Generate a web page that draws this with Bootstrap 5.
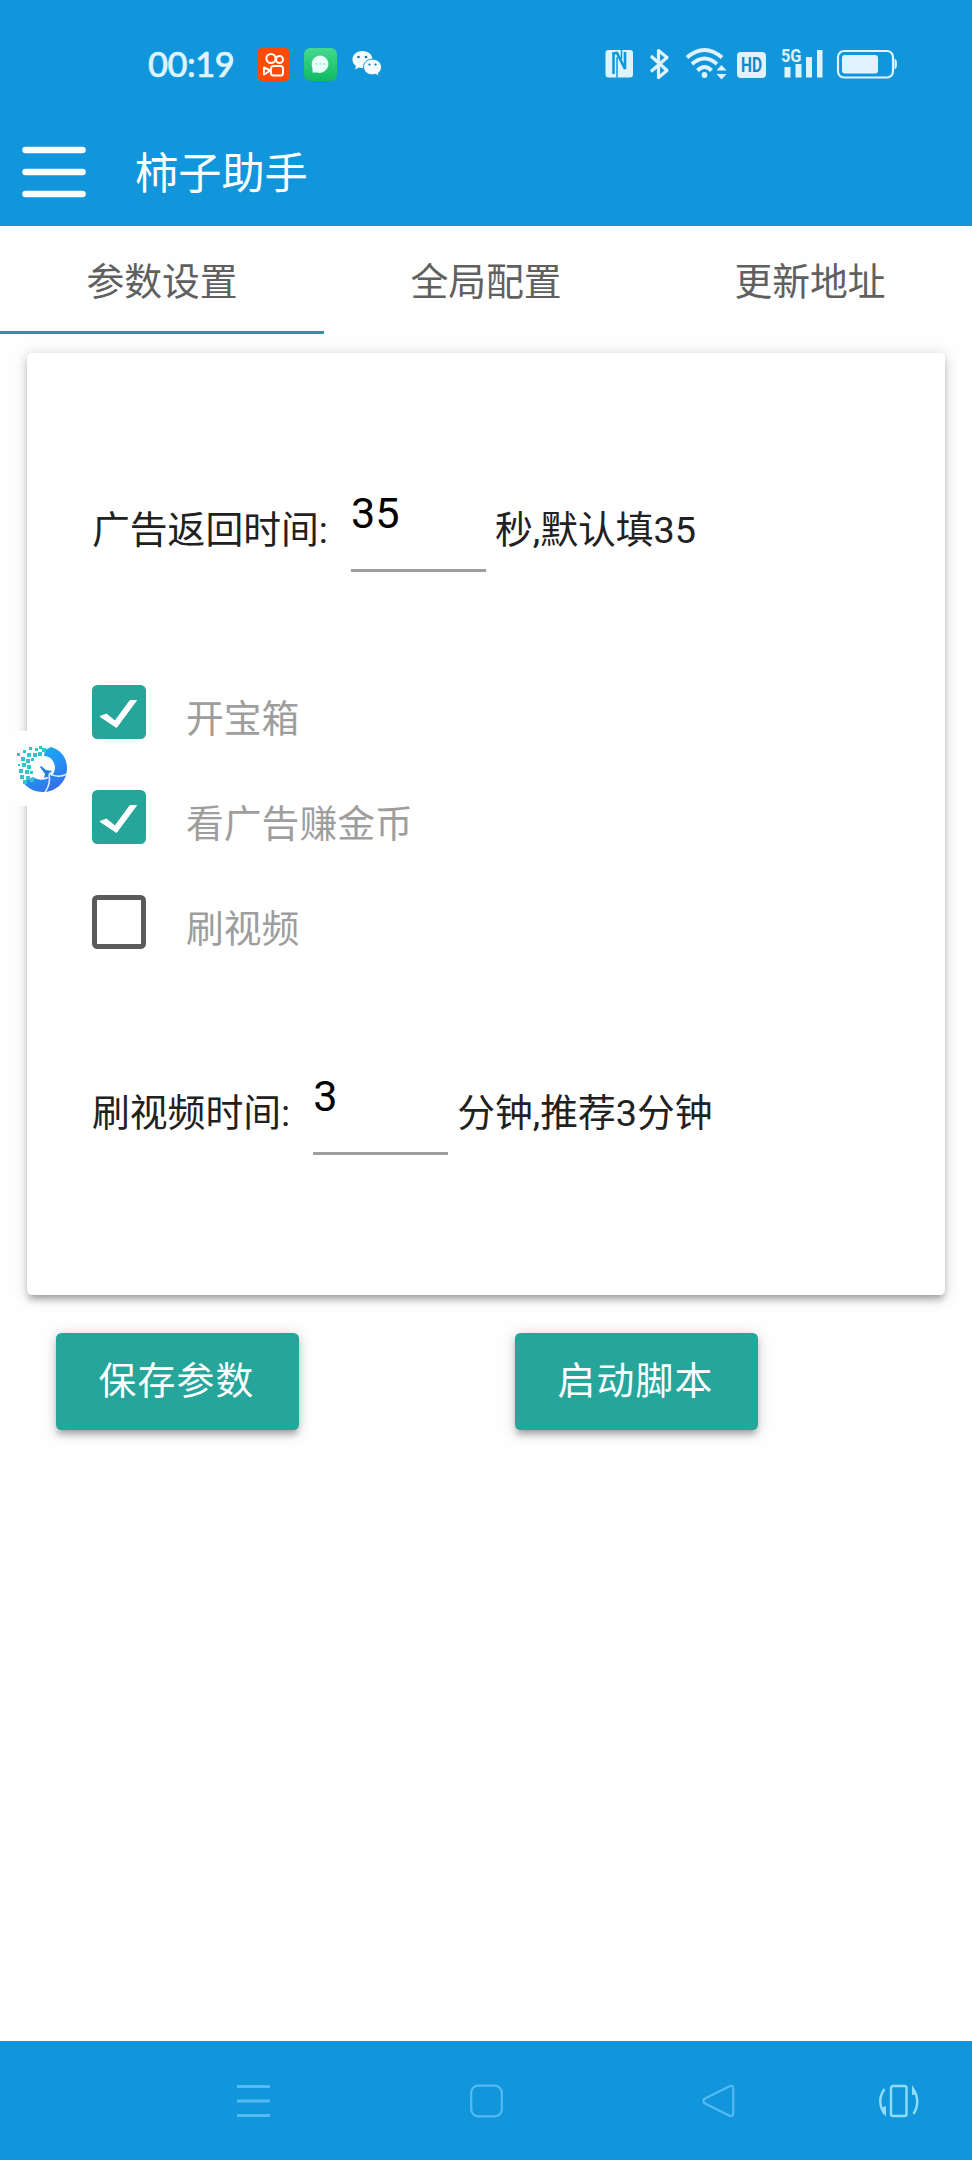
<!DOCTYPE html>
<html lang="zh-CN">
<head>
<meta charset="utf-8">
<meta name="viewport" content="width=device-width, initial-scale=1">
<title>柿子助手</title>
<link href="https://cdn.jsdelivr.net/npm/bootstrap@5.3.0/dist/css/bootstrap.min.css" rel="stylesheet">
<style>
  body{font-family:Roboto,"Noto Sans CJK SC",sans-serif;font-size:37.8px;line-height:56px;color:#212121;background:#fefefe}
  .screen{width:972px;height:2160px}
  .brand-bg{background:#1296db}
  svg{display:block;flex:none;overflow:visible}
  .status-bar{height:118px;padding:10px 75px 0 148px;color:#dff3ff}
  .clock{font:500 34.5px/40px Lato,sans-serif;letter-spacing:-.5px;width:109px;-webkit-text-stroke:.6px currentColor}
  .status-gap{margin-left:14px}
  .app-bar{height:108px;padding-left:22px}
  .app-title{font-size:43.2px;font-weight:400;margin-left:49px;padding-top:6px}
  .tab-row{height:108px}
  .tab-row .nav-link{color:#606060;height:108px;padding:2px 0 0;line-height:108px;border:0;border-radius:0;border-bottom:3px solid transparent}
  .tab-row .nav-link.active{border-bottom-color:#3390ad;color:#606060}
  .raised{box-shadow:0 5.4px 5.4px 0 rgba(0,0,0,.14),0 8.1px 2.7px -5.4px rgba(0,0,0,.12),0 2.7px 13.5px 0 rgba(0,0,0,.2)}
  .panel{margin:19px 27px 0;height:942px;border:0;border-radius:5.4px;padding:100px 65px 0}
  .field-row{height:119px}
  .field-row label,.field-row span{padding-top:35px}
  .field-row .form-control{width:135px;height:119px;margin:0 9px 0 23px;padding:4px 0 0;border:0;border-bottom:3px solid #9e9e9e;border-radius:0;font-size:43.2px;line-height:66px;color:#000;background:none;box-shadow:none}
  .options{margin-top:113px;height:264px;margin-bottom:87px;gap:51.3px}
  .options .form-check{padding:0;margin:0;min-height:0;height:54px}
  .options .form-check-input{width:54px;height:54px;margin:0;float:none;border:5.4px solid #5a5a5a;border-radius:5.4px;background-color:#fff}
  .options .form-check-input:checked{border-color:#26a69a;background-color:#26a69a;background-image:url("data:image/svg+xml,%3Csvg xmlns='http://www.w3.org/2000/svg' viewBox='0 0 54 54'%3E%3Cpath d='M8 31.500L24.500 42.500L44.500 15.500H38L23 36L14.500 29Z' fill='%23fff' stroke='%23fff'/%3E%3C/svg%3E");background-size:54px 54px;background-origin:border-box;background-position:0 0}
  .options .form-check-label{color:#9e9e9e;margin-left:40px;padding-top:6px}
  .actions{padding:38px 56px 0;gap:216px}
  .actions .btn{height:97.2px;width:243px;padding:0 2px 0 0;background:#26a69a;color:#fff;border:0;border-radius:5.4px;font-size:37.8px;letter-spacing:1.2px}
  .sys-nav{height:119px;color:#55b9f3;padding-left:237px;gap:199.5px}
  .rotate-icon{margin-left:-57px}
  .float-ball{left:0;top:731px;width:82px;height:75px;background:#fefefe;border-radius:0 37px 37px 0}
</style>
</head>
<body>
<div class="screen position-relative d-flex flex-column overflow-hidden">
  <header class="brand-bg">
    <div class="status-bar d-flex align-items-center">
      <span class="clock">00:19</span>
      <svg width="33" height="33" viewBox="0 0 33 33" fill="none" stroke="#fff" stroke-width="2"><rect width="33" height="33" rx="5" fill="#ff4a08" stroke="none"/><circle cx="14" cy="10.500" r="4.600"/><circle cx="22.500" cy="11.500" r="3.500"/><rect x="14" y="18" width="12" height="9.500" rx="2.500"/><path d="M13.500 22.500L7 19.500v7z" stroke-linejoin="round"/></svg>
      <svg class="status-gap" width="33" height="33" viewBox="0 0 33 33"><defs><linearGradient id="g" x2="0" y2="1"><stop stop-color="#45d98d"/><stop offset="1" stop-color="#10b964"/></linearGradient></defs><rect width="33" height="33" rx="6" fill="url(#g)"/><path d="M16.500 7.500a9 8.700 0 1 1-3.500 17H8.500V20A8.800 8.800 0 0 1 16.500 7.500z" fill="#e9fff8"/><g fill="#9fe8c8"><circle cx="12.500" cy="16" r="1.100"/><circle cx="16.500" cy="16" r="1.100"/><circle cx="20.500" cy="16" r="1.100"/></g></svg>
      <svg class="status-gap" width="31" height="28" viewBox="-1 0 31 28"><path d="M10.500 1C4.500 1 .5 4.800.5 9.500c0 2.800 1.300 5 3.500 6.500L3 19.500l4-2c1.200.4 2.400.5 3.500.5 6 0 10-4 10-8.500S16.500 1 10.500 1z" fill="#f4fcff"/><path d="M20.500 9.200c-5.400 0-9 3.500-9 7.800s3.600 7.800 9 7.800c1.100 0 2.200-.2 3.200-.5l3.500 2.200-.8-3.500c2.100-1.500 3.100-3.500 3.100-6 0-4.300-3.600-7.800-9-7.800z" fill="#f4fcff" stroke="#1296db"/><g fill="#1273ad"><circle cx="6.500" cy="7" r="1.300"/><circle cx="14" cy="7" r="1.300"/><circle cx="17.500" cy="14.500" r="1.100"/><circle cx="23.500" cy="14.500" r="1.100"/></g></svg>
      <div class="ms-auto d-flex">
        <svg width="45" height="32" viewBox="605 48 45 32"><rect x="605.500" y="50" width="27.500" height="27.500" rx="3" fill="currentColor"/><path d="M613.500 74V53.500L617 53L625 69V52" fill="none" stroke="#1296db" stroke-width="2.600"/><path d="M617 57v20.500M621.500 50v9" stroke="#1296db" stroke-width="1.500"/></svg>
        <svg width="36" height="32" viewBox="650 48 36 32" fill="none" stroke="currentColor" stroke-width="3.200"><path d="M651 56L667 70.500L658.500 77.500V50.500L667 57.500L651 71.500" stroke-linejoin="round"/></svg>
        <svg width="51" height="32" viewBox="686 48 51 32" fill="none" stroke="currentColor" stroke-width="4"><path d="M687 57.500Q704.500 42.500 722 57.500M692 64Q704.500 53 717 64M697.500 70.500Q704.500 63.500 711.500 70.500"/><circle cx="704.500" cy="75" r="2.900" fill="currentColor" stroke="none"/><path d="M721.500 65L726.500 70.500H716.500zM721.500 79.500L726.500 74H716.500z" fill="currentColor" stroke="none"/></svg>
        <svg width="44" height="32" viewBox="737 48 44 32"><rect x="737" y="52" width="29" height="26" rx="4" fill="currentColor"/><text x="751.500" y="72" text-anchor="middle" textLength="21" lengthAdjust="spacingAndGlyphs" font-family="Roboto,sans-serif" font-weight="700" font-size="20" fill="#1785c4">HD</text></svg>
        <svg width="56" height="32" viewBox="781 48 56 32" fill="currentColor"><text x="781" y="62" font-family="Roboto,sans-serif" font-weight="700" font-size="18.500" textLength="20.500" lengthAdjust="spacingAndGlyphs">5G</text><path d="M784.500 67h6v10.500h-6zM795.500 64h6v13.500h-6zM806 57h6v20.500h-6zM817 50h5.500v27.500H817z"/></svg>
        <svg width="60" height="32" viewBox="837 48 60 32" fill="currentColor"><rect x="838" y="51" width="55" height="26.500" rx="6" fill="none" stroke="currentColor" stroke-width="2.200"/><rect x="842" y="55" width="36" height="18.500" rx="3"/><path d="M894.500 59q2.500 0 2.500 5t-2.500 5z"/></svg>
      </div>
    </div>
    <div class="app-bar d-flex align-items-center">
      <svg width="64" height="52" viewBox="0 0 64 52" stroke="#fff" stroke-width="6.500" stroke-linecap="round"><path d="M3.500 4h57M3.500 26h57M3.500 48h57"/></svg>
      <h1 class="app-title text-white mb-0">柿子助手</h1>
    </div>
  </header>

  <ul class="tab-row nav nav-justified">
    <li class="nav-item"><a class="nav-link active" href="#">参数设置</a></li>
    <li class="nav-item"><a class="nav-link" href="#">全局配置</a></li>
    <li class="nav-item"><a class="nav-link" href="#">更新地址</a></li>
  </ul>

  <main>
    <section class="panel raised card">
      <div class="field-row d-flex align-items-center">
        <label for="back">广告返回时间:</label>
        <input id="back" class="form-control" value="35">
        <span>秒,默认填35</span>
      </div>
      <div class="options d-flex flex-column">
        <div class="form-check d-flex"><input class="form-check-input" type="checkbox" id="o1" checked><label class="form-check-label text-nowrap" for="o1">开宝箱</label></div>
        <div class="form-check d-flex"><input class="form-check-input" type="checkbox" id="o2" checked><label class="form-check-label text-nowrap" for="o2">看广告赚金币</label></div>
        <div class="form-check d-flex"><input class="form-check-input" type="checkbox" id="o3"><label class="form-check-label text-nowrap" for="o3">刷视频</label></div>
      </div>
      <div class="field-row d-flex align-items-center">
        <label for="watch">刷视频时间:</label>
        <input id="watch" class="form-control" value="3">
        <span>分钟,推荐3分钟</span>
      </div>
    </section>
    <div class="actions d-flex">
      <button class="btn raised" type="button">保存参数</button>
      <button class="btn raised" type="button">启动脚本</button>
    </div>
  </main>

  <footer class="sys-nav brand-bg mt-auto d-flex align-items-center">
    <svg width="33" height="34" viewBox="0 0 33 34" stroke="currentColor" stroke-width="2.800"><path d="M0 2.500h33M0 17h33M0 31.500h33"/></svg>
    <svg width="33" height="34" viewBox="0 0 33 34" fill="none" stroke="currentColor" stroke-width="2.200"><rect x="1.200" y="1.700" width="30.600" height="30.600" rx="7"/></svg>
    <svg width="33" height="34" viewBox="0 0 33 34" fill="none" stroke="currentColor" stroke-width="2.200"><path d="M2.200 15L27.500 2.200Q31.200.8 31.200 5V29Q31.200 33.200 27.500 31.800L2.200 19Q.4 17 2.200 15z"/></svg>
    <svg class="rotate-icon" width="42" height="34" viewBox="0 0 42 34" fill="none" stroke="#8fdcff" stroke-width="2.400"><rect x="13" y="2" width="15.500" height="30" rx="2"/><path d="M6.500 5Q-2 17 6.500 30M34.500 4Q43.500 17 35.500 30"/><path d="M3 24l5-2v11zM34 1l5 9-5 1z" fill="#8fdcff" stroke="none"/></svg>
  </footer>

  <div class="float-ball position-absolute">
    <svg width="82" height="75" viewBox="0 731 82 75"><defs><linearGradient id="b" x1="0" y1="0" x2=".6" y2="1"><stop stop-color="#20b8df"/><stop offset=".5" stop-color="#2099f5"/><stop offset="1" stop-color="#3570e8"/></linearGradient></defs>
      <path d="M45 750L51 747C62 750 67 759 67 768C67 782 56 792 43 792C34 792 27 788 23 782L33 777C41 783 54 779 55 768C55 762 51 756 44 756Z" fill="url(#b)"/>
      <path d="M41 766l5 4 6 1-2 2 2 6-5-2-3 1 1-4-5-7z" fill="#247fd9"/>
      <path d="M49 773Q57 779 67 774M49 774Q51 784 45 792" fill="none" stroke="#dff4ff" stroke-width="1.500"/>
      <g fill="#2fc6cb"><path d="M17 753h3v3h-3zM23 750h3v3h-3zM29 747h3v3h-3zM35 748h3v3h-3zM39 746h3v3h-3zM27 753h4v4h-4zM33 753h4v4h-4zM38 752h4v4h-4zM42 748h4v4h-4zM21 757h4v4h-4zM26 759h4v4h-4zM31 758h3v3h-3zM18 764h2v2h-2zM22 763h4v4h-4zM27 765h4v4h-4zM19 769h4v4h-4zM25 770h4v4h-4zM30 771h3v3h-3zM20 775h4v4h-4zM26 776h4v4h-4zM23 780h4v4h-4zM30 778h4v4h-4z"/></g>
    </svg>
  </div>
</div>
<script src="https://cdn.jsdelivr.net/npm/bootstrap@5.3.0/dist/js/bootstrap.bundle.min.js"></script>
</body>
</html>
